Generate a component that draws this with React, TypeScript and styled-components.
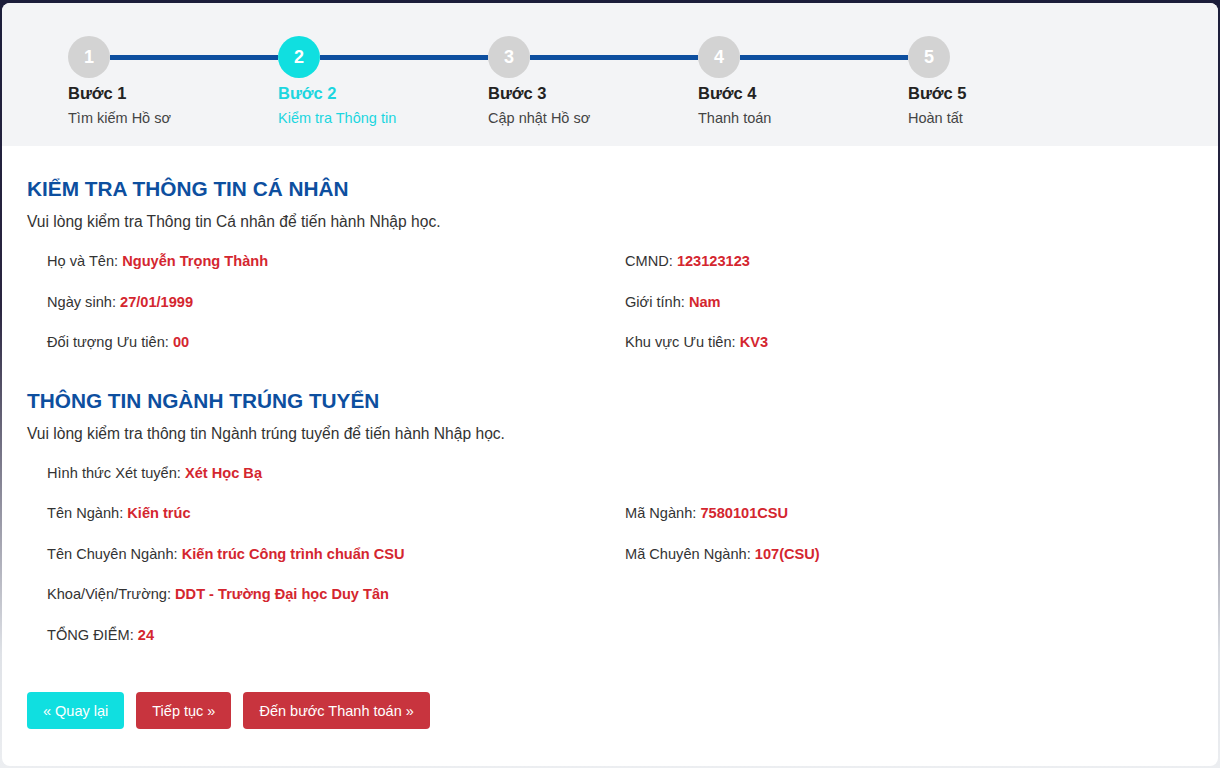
import React from "react";
import styled, { createGlobalStyle } from "styled-components";

const GlobalStyle = createGlobalStyle`
  html, body {
    margin: 0;
    padding: 0;
  }
  body {
    font-family: "Liberation Sans", Arial, sans-serif;
    background: linear-gradient(180deg, #1b1d3a 0%, #2a2540 40%, #dfe2e7 85%, #eceef1 100%);
    min-height: 768px;
    overflow: hidden;
  }
`;

const steps = [
  { title: "Bước 1", sub: "Tìm kiếm Hồ sơ" },
  { title: "Bước 2", sub: "Kiểm tra Thông tin" },
  { title: "Bước 3", sub: "Cập nhật Hồ sơ" },
  { title: "Bước 4", sub: "Thanh toán" },
  { title: "Bước 5", sub: "Hoàn tất" },
];

const ACTIVE = 1;

type Field = { label: string; value: string };

const personal: Field[][] = [
  [
    { label: "Họ và Tên", value: "Nguyễn Trọng Thành" },
    { label: "CMND", value: "123123123" },
  ],
  [
    { label: "Ngày sinh", value: "27/01/1999" },
    { label: "Giới tính", value: "Nam" },
  ],
  [
    { label: "Đối tượng Ưu tiên", value: "00" },
    { label: "Khu vực Ưu tiên", value: "KV3" },
  ],
];

const major: Field[][] = [
  [{ label: "Hình thức Xét tuyển", value: "Xét Học Bạ" }],
  [
    { label: "Tên Ngành", value: "Kiến trúc" },
    { label: "Mã Ngành", value: "7580101CSU" },
  ],
  [
    { label: "Tên Chuyên Ngành", value: "Kiến trúc Công trình chuẩn CSU" },
    { label: "Mã Chuyên Ngành", value: "107(CSU)" },
  ],
  [{ label: "Khoa/Viện/Trường", value: "DDT - Trường Đại học Duy Tân" }],
  [{ label: "TỔNG ĐIỂM", value: "24" }],
];

function InfoTable({ rows }: { rows: Field[][] }) {
  return (
    <InfoList>
      {rows.map((row, r) => (
        <InfoRow key={r}>
          {row.map((f) => (
            <InfoCell key={f.label}>
              {f.label}: <Value>{f.value}</Value>
            </InfoCell>
          ))}
        </InfoRow>
      ))}
    </InfoList>
  );
}

export default function App() {
  return (
    <>
      <GlobalStyle />
      <Card>
        <StepBar>
          {steps.map((s, i) => (
            <Step key={s.title}>
              <StepTrack>
                <Circle $active={i === ACTIVE}>{i + 1}</Circle>
                {i < steps.length - 1 && <Connector />}
              </StepTrack>
              <StepTitle $active={i === ACTIVE}>{s.title}</StepTitle>
              <StepSub $active={i === ACTIVE}>{s.sub}</StepSub>
            </Step>
          ))}
        </StepBar>

        <Body>
          <Section>
            <Heading>KIỂM TRA THÔNG TIN CÁ NHÂN</Heading>
            <Lead>Vui lòng kiểm tra Thông tin Cá nhân để tiến hành Nhập học.</Lead>
            <InfoTable rows={personal} />
          </Section>

          <Section>
            <Heading>THÔNG TIN NGÀNH TRÚNG TUYỂN</Heading>
            <Lead>Vui lòng kiểm tra thông tin Ngành trúng tuyển để tiến hành Nhập học.</Lead>
            <InfoTable rows={major} />
          </Section>

          <Actions>
            <Button $variant="info">« Quay lại</Button>
            <Button $variant="danger">Tiếp tục »</Button>
            <Button $variant="danger">Đến bước Thanh toán »</Button>
          </Actions>
        </Body>
      </Card>
    </>
  );
}

const Card = styled.div`
  margin: 3px 2px 0 2px;
  width: 1216px;
  height: 763px;
  background: #ffffff;
  border-radius: 8px;
  overflow: hidden;
  display: flex;
  flex-direction: column;
`;

const StepBar = styled.div`
  background: #f3f4f6;
  height: 143px;
  box-sizing: border-box;
  padding: 33px 0 0 66px;
  display: flex;
`;

const Step = styled.div`
  width: 210px;
  display: flex;
  flex-direction: column;
`;

const StepTrack = styled.div`
  display: flex;
  align-items: center;
  height: 42px;
`;

const Circle = styled.div<{ $active: boolean }>`
  width: 42px;
  height: 42px;
  flex: none;
  border-radius: 50%;
  background: ${(p) => (p.$active ? "#10dfe0" : "#d3d3d3")};
  color: #ffffff;
  font-weight: bold;
  font-size: 18px;
  display: flex;
  align-items: center;
  justify-content: center;
`;

const Connector = styled.div`
  flex: 1;
  height: 5px;
  background: #0d4f9f;
`;

const StepTitle = styled.div<{ $active: boolean }>`
  margin-top: 5px;
  font-size: 16.5px;
  font-weight: bold;
  line-height: 20px;
  color: ${(p) => (p.$active ? "#1cd6df" : "#222222")};
`;

const StepSub = styled.div<{ $active: boolean }>`
  margin-top: 6px;
  font-size: 14.5px;
  line-height: 18px;
  color: ${(p) => (p.$active ? "#1cd6df" : "#444444")};
`;

const Body = styled.div`
  padding: 30px 25px 0 25px;
`;

const Section = styled.section`
  margin-bottom: 25px;
`;

const Heading = styled.h2`
  margin: 0;
  font-size: 20.8px;
  line-height: 25px;
  font-weight: bold;
  color: #0d4f9f;
`;

const Lead = styled.p`
  margin: 11px 0 0 0;
  font-size: 15.6px;
  line-height: 20px;
  color: #333333;
`;

const InfoList = styled.div`
  margin-top: 9px;
  padding-left: 20px;
`;

const InfoRow = styled.div`
  display: grid;
  grid-template-columns: 578px 1fr;
  height: 40.5px;
  align-items: center;
`;

const InfoCell = styled.div`
  font-size: 14.6px;
  color: #333333;
`;

const Value = styled.span`
  font-weight: bold;
  color: #d4262f;
`;

const Actions = styled.div`
  display: flex;
  gap: 12px;
  margin-top: 37px;
`;

const Button = styled.button<{ $variant: "info" | "danger" }>`
  height: 37px;
  padding: 0 16px;
  border: none;
  border-radius: 4px;
  font-family: "Liberation Sans", Arial, sans-serif;
  font-size: 14.5px;
  color: #ffffff;
  cursor: pointer;
  background: ${(p) => (p.$variant === "info" ? "#10dfe0" : "#c8343e")};
`;
